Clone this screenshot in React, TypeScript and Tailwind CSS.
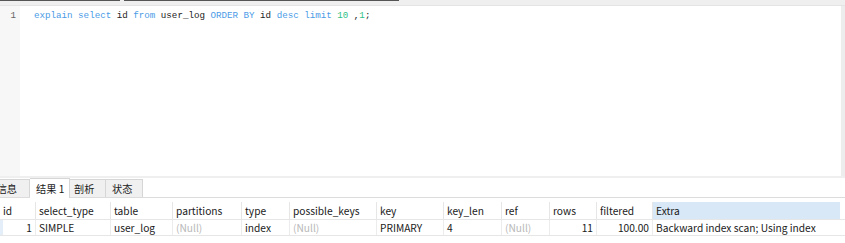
const cols = [
  { name: 'id', w: 36, v: '1', right: true },
  { name: 'select_type', w: 75, v: 'SIMPLE' },
  { name: 'table', w: 62, v: 'user_log' },
  { name: 'partitions', w: 69, v: '(Null)', nul: true },
  { name: 'type', w: 48, v: 'index' },
  { name: 'possible_keys', w: 87, v: '(Null)', nul: true },
  { name: 'key', w: 67, v: 'PRIMARY' },
  { name: 'key_len', w: 58, v: '4' },
  { name: 'ref', w: 48, v: '(Null)', nul: true },
  { name: 'rows', w: 47, v: '11', right: true },
  { name: 'filtered', w: 56, v: '100.00', right: true },
  { name: 'Extra', w: 187, v: 'Backward index scan; Using index', active: true },
];

const kw = 'text-[#4a9be6]';
const num = 'text-[#2fbf86]';
const id = 'text-[#222]';

export default function App() {
  return (
    <div className="w-[845px] h-[243px] bg-white overflow-hidden flex flex-col font-['Noto_Sans_CJK_SC',sans-serif] text-[10.2px] text-[#1a1a1a]">
      {/* 顶部 */}
      <div className="h-[5px] bg-[#efefef] flex shrink-0">
        <div className="w-[120px] h-[1px] bg-[#555]" />
        <div className="w-[4px]" />
        <div className="w-[275px] h-[1px] bg-[#555]" />
      </div>

      {/* 编辑器 */}
      <div className="h-[171px] flex border-t border-[#e4e4e4] shrink-0">
        <div className="flex-1 flex bg-white">
          <div className="w-[20px] bg-[#f7f7f7] flex justify-end pr-[4px] pt-[2px] font-['Liberation_Mono',monospace] text-[9.2px] text-[#666] leading-[16px]">
            1
          </div>
          <div className="pl-[14px] pt-[2px] font-['Liberation_Mono',monospace] text-[9.2px] leading-[16px] whitespace-pre">
            <span className={kw}>explain select</span>
            <span className={id}> id </span>
            <span className={kw}>from</span>
            <span className={id}> user_log </span>
            <span className={kw}>ORDER BY</span>
            <span className={id}> id </span>
            <span className={kw}>desc limit</span>
            <span className={num}> 10</span>
            <span className={id}> ,</span>
            <span className={num}>1</span>
            <span className={id}>;</span>
          </div>
        </div>
        <div className="w-[4px] bg-[#ededed]" />
      </div>

      <div className="h-[2px] bg-[#efefef] shrink-0" />

      {/* 标签 */}
      <div className="h-[20px] flex items-end border-b border-[#dcdcdc] shrink-0">
        <div className="w-[30px] h-[18px] bg-[#f0f0f0] border-t border-r border-[#d6d6d6] flex items-center justify-end pr-[12px] overflow-hidden whitespace-nowrap">信息</div>
        <div className="w-[40px] h-[20px] bg-white border-t border-r border-[#d6d6d6] flex items-center pl-[6px] -mb-[1px]">结果 1</div>
        <div className="w-[36px] h-[18px] bg-[#f0f0f0] border-t border-r border-[#d6d6d6] flex items-center pl-[4px]">剖析</div>
        <div className="w-[37px] h-[18px] bg-[#f0f0f0] border-t border-r border-[#d6d6d6] flex items-center pl-[6px]">状态</div>
      </div>

      <div className="h-[4px] shrink-0" />

      {/* 结果表 */}
      <div className="flex flex-col">
        <div className="flex h-[18px] border-b border-[#e6e6e6]">
          {cols.map((c) => (
            <div
              key={c.name}
              style={{ width: c.w }}
              className={`shrink-0 border-r border-[#e6e6e6] flex items-center px-[3px] ${c.active ? 'bg-[#d9e8f6] border-r-0' : ''}`}
            >
              {c.name}
            </div>
          ))}
        </div>
        <div className="flex h-[16px] border-b border-[#e6e6e6]">
          {cols.map((c, i) => (
            <div
              key={c.name}
              style={{ width: c.w }}
              className={`shrink-0 border-r border-[#ececec] flex items-center px-[3px] ${c.right ? 'justify-end' : ''} ${c.nul ? 'text-[#b8b8b8]' : ''} ${i === 0 ? 'bg-[linear-gradient(to_right,#e3eef9_3px,transparent_3px)]' : ''} ${c.active ? 'border-r-0' : ''}`}
            >
              {c.v}
            </div>
          ))}
        </div>
      </div>
    </div>
  );
}
